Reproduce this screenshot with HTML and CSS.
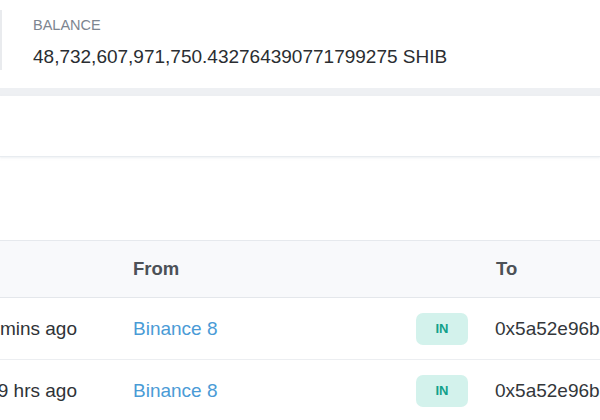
FILE: index.html
```html
<!DOCTYPE html>
<html>
<head>
<meta charset="utf-8">
<link rel="stylesheet" href="styles.css">
</head>
<body>
<div class="page">
  <section class="overview">
    <div class="ov-col">
      <div class="ov-label">BALANCE</div>
      <div class="ov-value">48,732,607,971,750.432764390771799275 SHIB</div>
    </div>
  </section>
  <div class="band"></div>
  <section class="tabs"></section>
  <section class="spacer"></section>
  <div class="table">
    <div class="tr thead">
      <div class="td age"></div>
      <div class="td">From</div>
      <div class="td"></div>
      <div class="td">To</div>
    </div>
    <div class="tr">
      <div class="td age"><span>5 mins ago</span></div>
      <div class="td"><a class="link">Binance 8</a></div>
      <div class="td"><span class="badge">IN</span></div>
      <div class="td addr">0x5a52e96bacdabb82fd05763e25335261b270efcb</div>
    </div>
    <div class="tr">
      <div class="td age"><span>9 hrs ago</span></div>
      <div class="td"><a class="link">Binance 8</a></div>
      <div class="td"><span class="badge">IN</span></div>
      <div class="td addr">0x5a52e96bacdabb82fd05763e25335261b270efcb</div>
    </div>
  </div>
</div>
</body>
</html>
```

FILE: styles.css
```css
html, body {
  margin: 0;
  padding: 0;
  background: #ffffff;
}
body {
  width: 600px;
  height: 420px;
  overflow: hidden;
  font-family: "Liberation Sans", Arial, sans-serif;
  color: #2b2f33;
}
.page {
  width: 600px;
}
.overview {
  height: 88px;
  padding-top: 10px;
  box-sizing: border-box;
  display: flex;
}
.ov-col {
  height: 60px;
  box-sizing: border-box;
  border-left: 2px solid #e9ebee;
  padding: 5px 0 0 31px;
}
.ov-label {
  font-size: 14.5px;
  line-height: 20px;
  color: #7d8590;
}
.ov-value {
  margin-top: 10px;
  font-size: 19px;
  line-height: 24px;
  color: #2a2d31;
  white-space: nowrap;
}
.band {
  height: 8px;
  background: #eef0f3;
}
.tabs {
  height: 60px;
  border-bottom: 1px solid #e8ecf0;
  box-shadow: 0 1px 2px rgba(220, 226, 232, 0.5);
}
.spacer {
  height: 83px;
}
.table {
  border-top: 1px solid #e6e9ed;
}
.tr {
  display: grid;
  grid-template-columns: 133px 283px 79px 1fr;
  align-items: center;
  height: 61px;
  border-bottom: 1px solid #eceef1;
  font-size: 19px;
  white-space: nowrap;
}
.tr.thead {
  height: 56px;
  background: #f8f9fb;
  border-bottom: 1px solid #e4e7eb;
  font-weight: bold;
  font-size: 18.5px;
  color: #4c5157;
}
.tr.thead .td:last-child {
  padding-left: 1px;
}
.td {
  overflow: hidden;
  min-width: 0;
}
.td.age {
  display: flex;
  justify-content: flex-end;
  padding-right: 56px;
  overflow: visible;
  color: #2f3337;
}
.link {
  color: #4a9bd6;
  text-decoration: none;
}
.badge {
  display: flex;
  align-items: center;
  justify-content: center;
  width: 52px;
  height: 32px;
  border-radius: 7px;
  background: #d3f2ec;
  color: #12a08a;
  font-size: 13px;
  font-weight: bold;
}
.addr {
  color: #33373b;
}
```
